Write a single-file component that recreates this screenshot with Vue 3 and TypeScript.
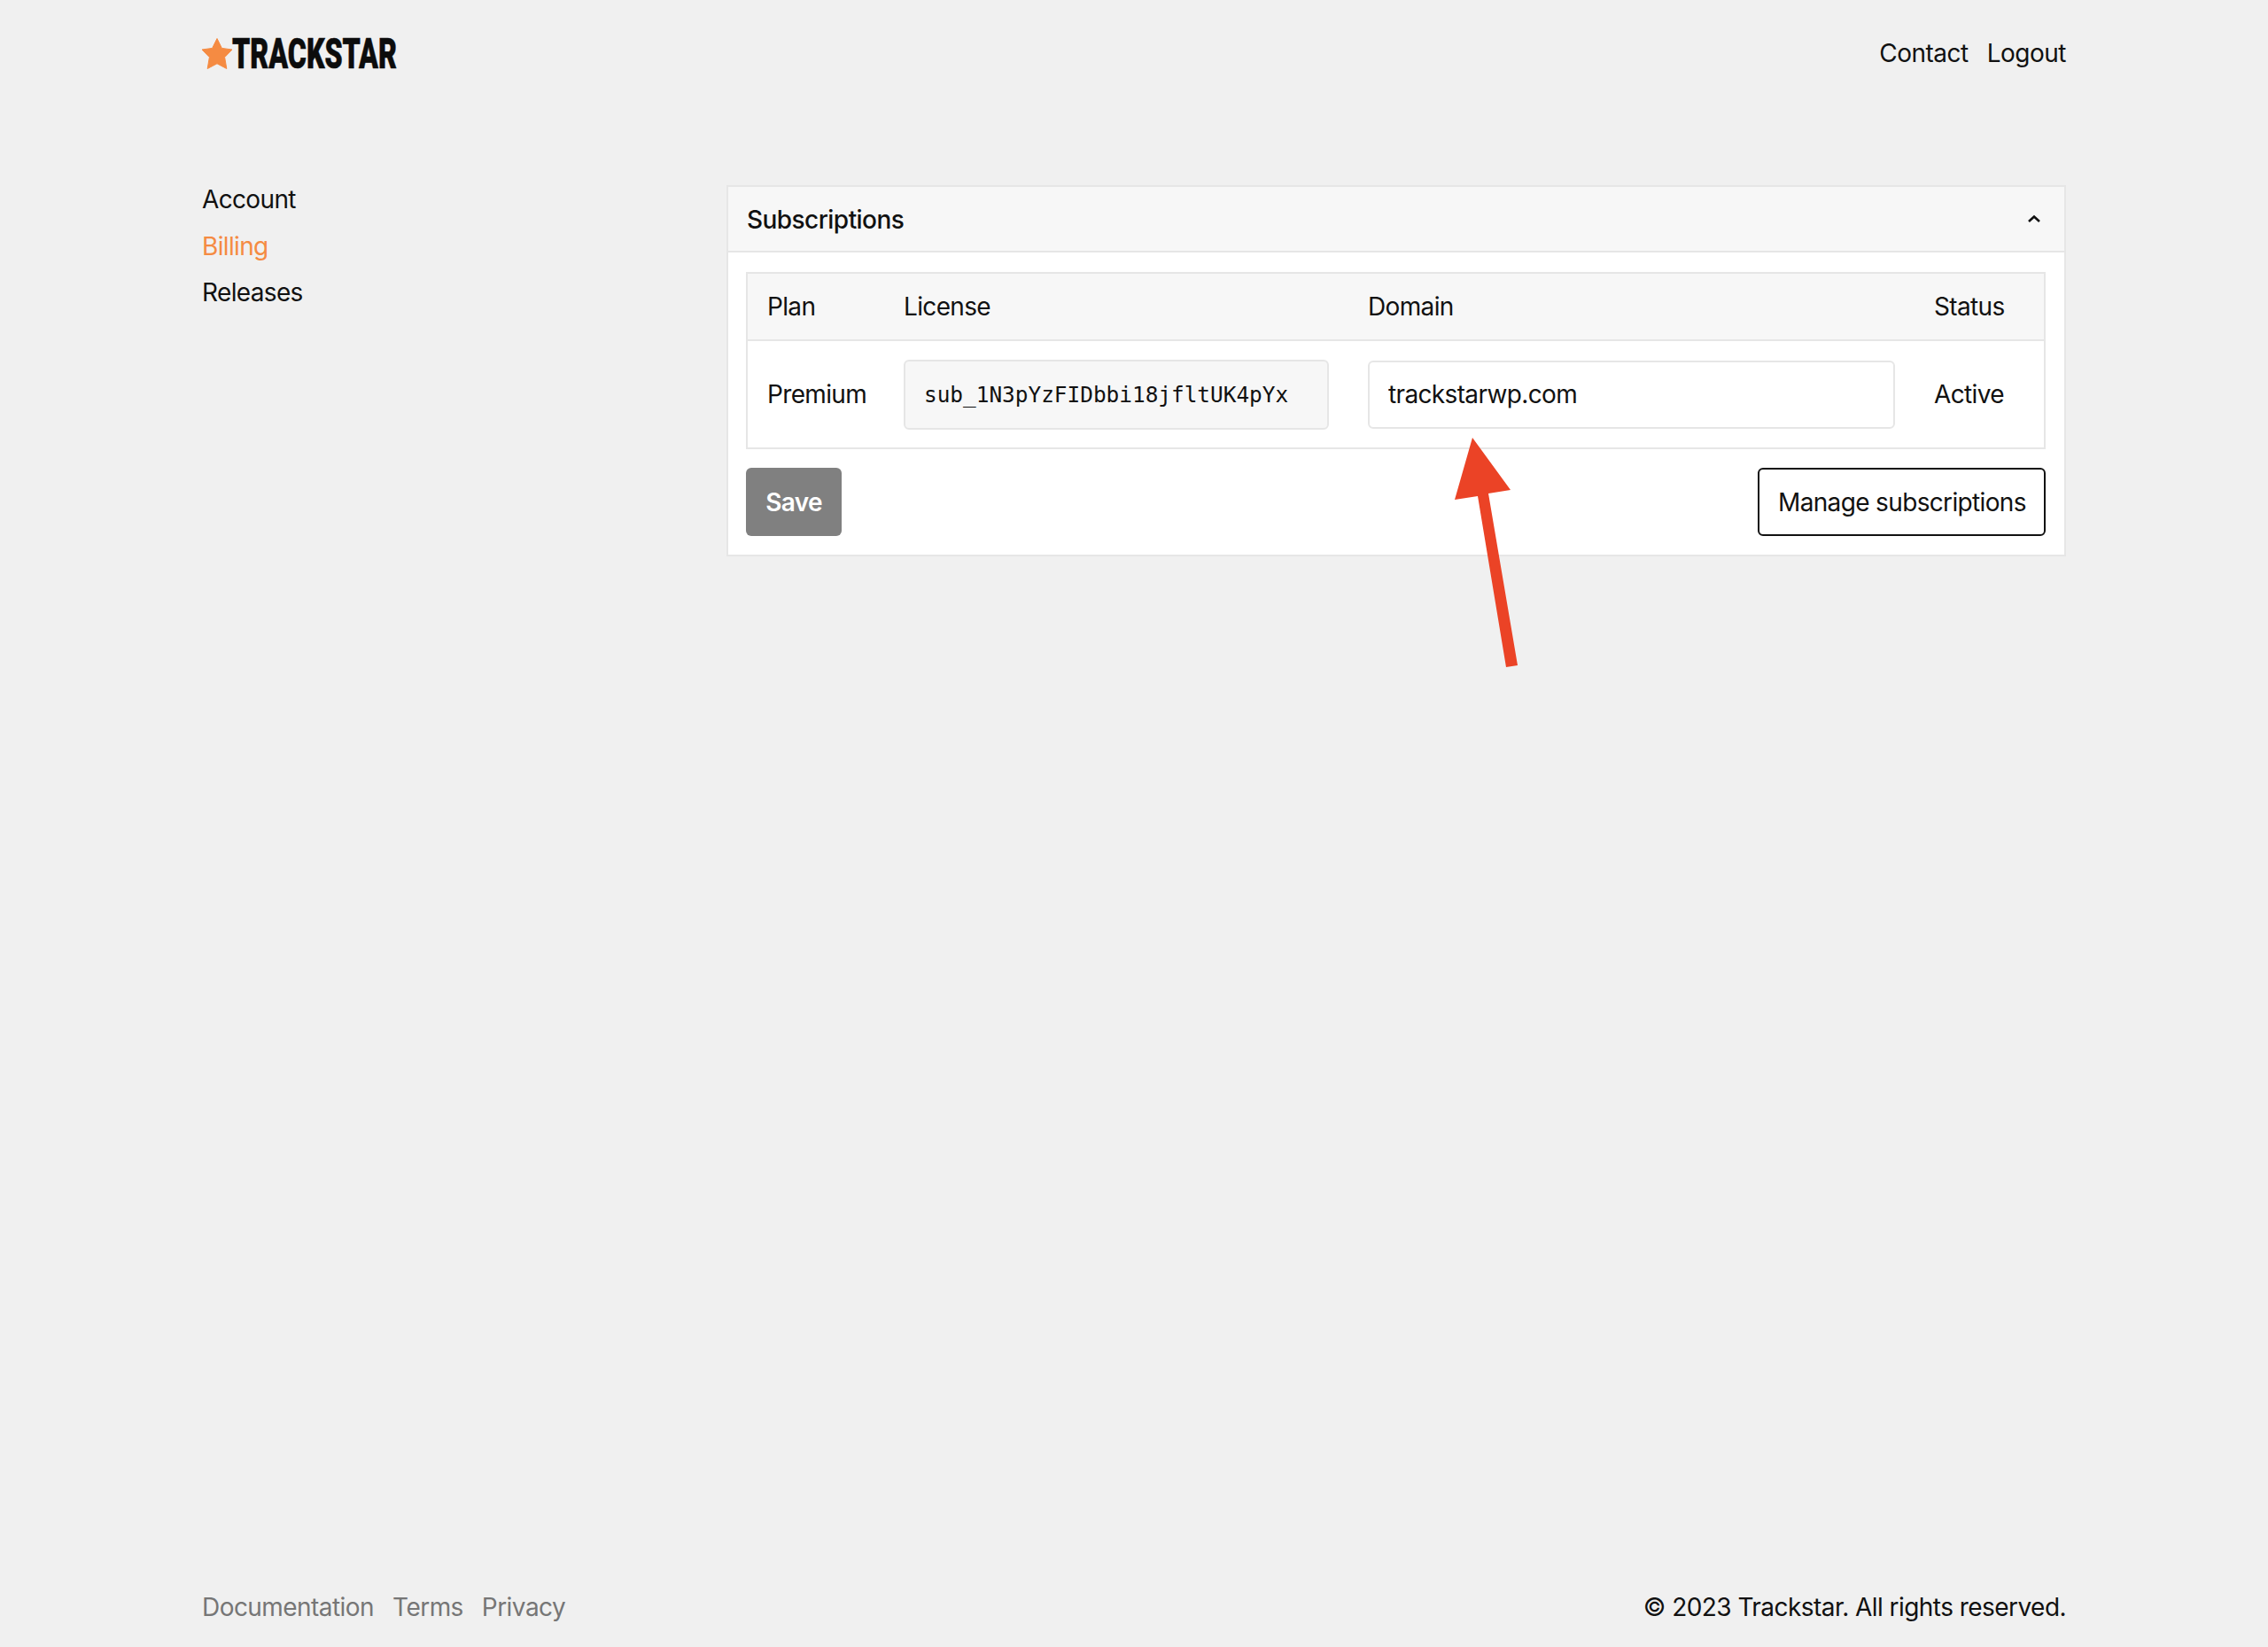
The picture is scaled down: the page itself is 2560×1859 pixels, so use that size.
<script setup lang="ts">
const sideLinks = [
  { label: 'Account', active: false },
  { label: 'Billing', active: true },
  { label: 'Releases', active: false },
]
const footLinks = ['Documentation', 'Terms', 'Privacy']
</script>

<template>
  <div class="page">
    <header class="top">
      <div class="logo">
        <svg class="star" viewBox="0 0 34 35" aria-hidden="true">
          <path d="M17 0.5 L22.4 11.4 L34 13 L25.6 21.6 L27.8 34.5 L17 28.8 L6.2 34.5 L8.4 21.6 L0 13 L11.6 11.4 Z" stroke="#f58b42" stroke-width="1" stroke-linejoin="round" />
        </svg>
        <span class="word">TRACKSTAR</span>
      </div>
      <nav class="topnav">
        <a>Contact</a>
        <a>Logout</a>
      </nav>
    </header>

    <main class="main">
      <aside class="side">
        <a v-for="l in sideLinks" :key="l.label" :class="{ active: l.active }">{{ l.label }}</a>
      </aside>

      <section class="panel">
        <div class="panel-head">
          <span class="panel-title">Subscriptions</span>
          <svg class="chev" viewBox="0 0 16 10" aria-hidden="true">
            <path d="M2 8 L8 2.5 L14 8" />
          </svg>
        </div>
        <div class="panel-body">
          <table class="tbl">
            <colgroup>
              <col class="c1" />
              <col class="c2" />
              <col class="c3" />
              <col class="c4" />
            </colgroup>
            <thead>
              <tr>
                <th>Plan</th>
                <th>License</th>
                <th>Domain</th>
                <th>Status</th>
              </tr>
            </thead>
            <tbody>
              <tr>
                <td>Premium</td>
                <td><input class="field mono" readonly value="sub_1N3pYzFIDbbi18jfltUK4pYx" /></td>
                <td><input class="field" value="trackstarwp.com" /></td>
                <td>Active</td>
              </tr>
            </tbody>
          </table>
          <div class="actions">
            <button class="btn save">Save</button>
            <button class="btn manage">Manage subscriptions</button>
          </div>
        </div>
        <svg class="arrow" viewBox="0 0 80 262" aria-hidden="true">
          <path d="M20 0 L63 59 L38 63 L71 257 L58 259 L26 66 L0 70 Z" />
        </svg>
      </section>
    </main>

    <footer class="foot">
      <div class="foot-links">
        <a v-for="f in footLinks" :key="f">{{ f }}</a>
      </div>
      <div class="copy">© 2023 Trackstar. All rights reserved.</div>
    </footer>
  </div>
</template>

<style>
html, body { margin: 0; background: #f0f0f0; }
</style>

<style scoped>
.page {
  min-height: 1859px;
  box-sizing: border-box;
  padding: 0 228px;
  display: flex;
  flex-direction: column;
  background: #f0f0f0;
  color: #111;
  font-family: Inter, "Liberation Sans", sans-serif;
  font-size: 28px;
  letter-spacing: -0.65px;
}
.top {
  height: 120px;
  display: flex;
  align-items: center;
  justify-content: space-between;
}
.logo { display: flex; align-items: center; }
.star { width: 34px; height: 35px; fill: #f58b42; display: block; }
.word {
  display: block;
  width: 185px;
  font-family: Roboto, sans-serif;
  font-weight: 900;
  font-size: 49px;
  line-height: 35px;
  letter-spacing: 0;
  color: #0c0c0c;
  transform: scaleX(0.656);
  transform-origin: left center;
  white-space: nowrap;
  -webkit-text-stroke: 0.6px #0c0c0c;
}
.topnav { display: flex; gap: 21px; letter-spacing: -0.5px; }
.main {
  flex: 1;
  margin-top: 79px;
  display: flex;
  align-items: flex-start;
}
.side {
  width: 592px;
  flex: none;
  display: flex;
  flex-direction: column;
  line-height: 52.5px;
}
.side .active { color: #f58b42; }
.panel {
  position: relative;
  margin-top: 10px;
  flex: 1;
  box-sizing: border-box;
  height: 419px;
  background: #fff;
  border: 2px solid #e6e6e6;
}
.panel-head {
  height: 74px;
  box-sizing: border-box;
  padding: 2px 26px 0 21px;
  display: flex;
  align-items: center;
  justify-content: space-between;
  background: #f7f7f7;
  border-bottom: 2px solid #e6e6e6;
}
.panel-title { font-weight: 550; letter-spacing: -0.55px; }
.chev {
  width: 16px;
  height: 10px;
  margin-top: -2px;
  fill: none;
  stroke: #111;
  stroke-width: 2.6;
}
.panel-body { padding: 22px 21px 22px 20px; }
.tbl {
  width: 100%;
  table-layout: fixed;
  border-collapse: separate;
  border-spacing: 0;
  border: 2px solid #e6e6e6;
}
.c1 { width: 154px; }
.c2 { width: 524px; }
.c3 { width: 639px; }
.tbl th {
  height: 74px;
  padding: 0 22px;
  text-align: left;
  font-weight: 400;
  background: #f7f7f7;
  border-bottom: 2px solid #e6e6e6;
}
.tbl td {
  height: 120px;
  padding: 0 22px;
}
.field {
  display: block;
  width: 100%;
  height: 77px;
  box-sizing: border-box;
  padding: 0 21px;
  border: 2px solid #e6e6e6;
  border-radius: 6px;
  background: #fff;
  color: #111;
  font: inherit;
  letter-spacing: inherit;
  outline: none;
}
.mono {
  height: 79px;
  background: #f7f7f7;
  font-family: "DejaVu Sans Mono", monospace;
  font-size: 24.4px;
  letter-spacing: 0;
}
.actions {
  margin-top: 21px;
  display: flex;
  justify-content: space-between;
}
.btn {
  height: 77px;
  box-sizing: border-box;
  padding: 0 21px;
  border-radius: 6px;
  font: inherit;
  letter-spacing: inherit;
  white-space: nowrap;
}
.save {
  border: 0;
  background: #808080;
  color: #fff;
  font-weight: 600;
  width: 108px;
}
.manage {
  border: 2px solid #111;
  background: #fff;
  color: #111;
  width: 325px;
}
.arrow {
  position: absolute;
  left: 820px;
  top: 283px;
  width: 80px;
  height: 262px;
  fill: #eb4326;
}
.foot {
  height: 90px;
  display: flex;
  align-items: center;
  justify-content: space-between;
  letter-spacing: -0.55px;
}
.foot-links { display: flex; gap: 21px; color: #767676; }
</style>
